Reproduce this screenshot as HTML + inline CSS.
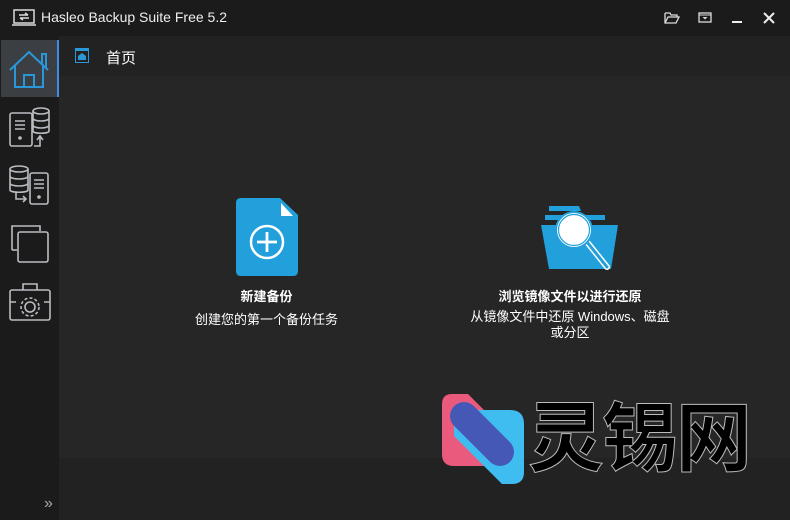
<!DOCTYPE html><html><head><meta charset="utf-8"><style>
body{margin:0;width:790px;height:520px;background:#1b1b1b;position:relative;overflow:hidden;font-family:"Liberation Sans","Noto Sans CJK SC",sans-serif;color:#fff}
.a{position:absolute}
</style></head><body>
<div class="a" style="left:0;top:0;width:790px;height:35px;background:#1b1b1b"></div>
<svg class="a" style="left:12px;top:9px" width="24" height="18" viewBox="0 0 24 18"><rect x="2" y="1" width="20" height="13" fill="none" stroke="#ddd" stroke-width="1.5"/><path d="M0 16H24" stroke="#ddd" stroke-width="1.5"/><path d="M7 6H16M13 4L16 6M17 9H8M11 11L8 9" stroke="#ddd" stroke-width="1.4" fill="none"/></svg>
<div class="a" style="left:41px;top:9px;font-size:14px;color:#eee">Hasleo Backup Suite Free 5.2</div>
<svg class="a" style="left:664px;top:11px" width="16" height="13"><path d="M1 2H6L7 4H13V6M1 2V12H12L15 6H4L1 12" fill="none" stroke="#ddd" stroke-width="1.3"/></svg>
<svg class="a" style="left:698px;top:12px" width="14" height="11"><rect x="1" y="1" width="12" height="9" fill="none" stroke="#ddd" stroke-width="1.3"/><path d="M1 3H13" stroke="#ddd"/><path d="M4.5 5H9.5L7 7.5Z" fill="#ddd"/></svg>
<div class="a" style="left:732px;top:21px;width:10px;height:2px;background:#eee"></div>
<svg class="a" style="left:763px;top:12px" width="12" height="12"><path d="M1 1L11 11M11 1L1 11" stroke="#eee" stroke-width="2"/></svg>
<div class="a" style="left:59px;top:36px;width:731px;height:40px;background:#222"></div>
<div class="a" style="left:59px;top:76px;width:731px;height:382px;background:#262626"></div>
<div class="a" style="left:59px;top:458px;width:731px;height:62px;background:#222"></div>
<div class="a" style="left:1px;top:40px;width:56px;height:57px;background:#3b3f44"></div>
<div class="a" style="left:57px;top:40px;width:2px;height:57px;background:#3a8ee6"></div>
<svg class="a" style="left:8px;top:48px" width="44" height="42"><path d="M2 22L21 4L40 22" fill="none" stroke="#2a97d8" stroke-width="2"/><path d="M34 16V6H38V20" fill="none" stroke="#2a97d8" stroke-width="2"/><path d="M7 18V39H35V18" fill="none" stroke="#2a97d8" stroke-width="2"/><path d="M16 39V27H26V39" fill="none" stroke="#2a97d8" stroke-width="2"/></svg>
<svg class="a" style="left:8px;top:107px" width="44" height="42" fill="none" stroke="#b9bcc1" stroke-width="1.6"><rect x="2" y="6" width="22" height="33" rx="2"/><path d="M7 14H17M7 18H17M7 22H17"/><circle cx="12" cy="31" r="1" fill="#b9bcc1"/><ellipse cx="33" cy="4" rx="8" ry="3"/><path d="M25 4V24M41 4V24M25 11C25 15 41 15 41 11M25 18C25 22 41 22 41 18M25 24C25 27 41 27 41 24"/><path d="M26 39H32V30M29 33L32 29L35 33"/></svg>
<svg class="a" style="left:8px;top:165px" width="44" height="42" fill="none" stroke="#b9bcc1" stroke-width="1.6"><ellipse cx="11" cy="4" rx="9" ry="3"/><path d="M2 4V25M20 4V25M2 11C2 15 20 15 20 11M2 18C2 22 20 22 20 18M2 25C2 28 20 28 20 25"/><rect x="22" y="8" width="18" height="31" rx="2"/><path d="M26 15H36M26 19H36M26 23H36"/><circle cx="31" cy="32" r="1" fill="#b9bcc1"/><path d="M8 28V34H18M15 31L18 34L15 37"/></svg>
<svg class="a" style="left:8px;top:222px" width="44" height="42" fill="none" stroke="#b9bcc1" stroke-width="1.6"><path d="M4 28V4H32V9"/><path d="M4 28H9"/><rect x="10" y="10" width="30" height="30" rx="2"/></svg>
<svg class="a" style="left:8px;top:282px" width="44" height="40" fill="none" stroke="#b9bcc1" stroke-width="1.6"><path d="M15 8V2H29V8"/><rect x="2" y="8" width="40" height="30" rx="2"/><path d="M2 20H8M36 20H42"/><circle cx="22" cy="25" r="5"/><circle cx="22" cy="25" r="9" stroke-dasharray="3 2.2"/></svg>
<div class="a" style="left:44px;top:495px;font-size:16px;color:#aaa">»</div>
<svg class="a" style="left:75px;top:48px" width="14" height="15"><rect x="0.5" y="0.5" width="13" height="14" fill="none" stroke="#2a97d8"/><rect x="0" y="0" width="14" height="3" fill="#2a97d8"/><path d="M3 8L7 5L11 8V12H3Z" fill="#2a97d8"/></svg>
<div class="a" style="left:106px;top:47px;font-size:15px">首页</div>
<svg class="a" style="left:236px;top:198px" width="62" height="78"><path d="M5 0H44L62 17V73Q62 78 57 78H5Q0 78 0 73V5Q0 0 5 0Z" fill="#22a0dc"/><path d="M45 5L57 18H45Z" fill="#fff"/><circle cx="31" cy="44" r="16" fill="none" stroke="#fff" stroke-width="2.5"/><path d="M31 34V54M21 44H41" stroke="#fff" stroke-width="2.8"/></svg>
<div class="a" style="left:200px;top:286px;width:133px;text-align:center;font-size:13px;font-weight:bold">新建备份</div>
<div class="a" style="left:180px;top:309px;width:173px;text-align:center;font-size:13px">创建您的第一个备份任务</div>
<svg class="a" style="left:541px;top:205px" width="80" height="70"><path d="M8 1H38L40 6H8Z" fill="#22a0dc"/><path d="M4 10H64V15H4Z" fill="#22a0dc"/><path d="M0 20H77L70 64H8Z" fill="#22a0dc"/><path d="M46 37L66 62" stroke="#fff" stroke-width="6" stroke-linecap="round"/><path d="M46 37L66 62" stroke="#22a0dc" stroke-width="3" stroke-linecap="round"/><circle cx="33" cy="25" r="19" fill="#22a0dc"/><circle cx="33" cy="25" r="17" fill="#fff"/><circle cx="33" cy="25" r="15.5" fill="none" stroke="#22a0dc" stroke-width="1.2"/></svg>
<div class="a" style="left:460px;top:286px;width:220px;text-align:center;font-size:13px;font-weight:bold">浏览镜像文件以进行还原</div>
<div class="a" style="left:470px;top:309px;width:200px;text-align:center;font-size:13px;line-height:16px">从镜像文件中还原 Windows、磁盘<br>或分区</div>
<svg class="a" style="left:440px;top:392px" width="88" height="94"><path d="M12 2H28L62 36V62Q62 74 50 74H14Q2 74 2 62V12Q2 2 12 2Z" fill="#e95a7c"/><path d="M26 18H70Q84 18 84 32V80Q84 92 72 92H62L14 44V30Q14 18 26 18Z" fill="#3fbcf0"/><path d="M24 24L60 60" stroke="#4658b6" stroke-width="28" stroke-linecap="round"/></svg>
<div class="a" style="left:528px;top:398px;font-size:76px;line-height:84px;font-weight:bold;color:#000;-webkit-text-stroke:1px #bbb;letter-spacing:-2px">灵锡网</div>
</body></html>
